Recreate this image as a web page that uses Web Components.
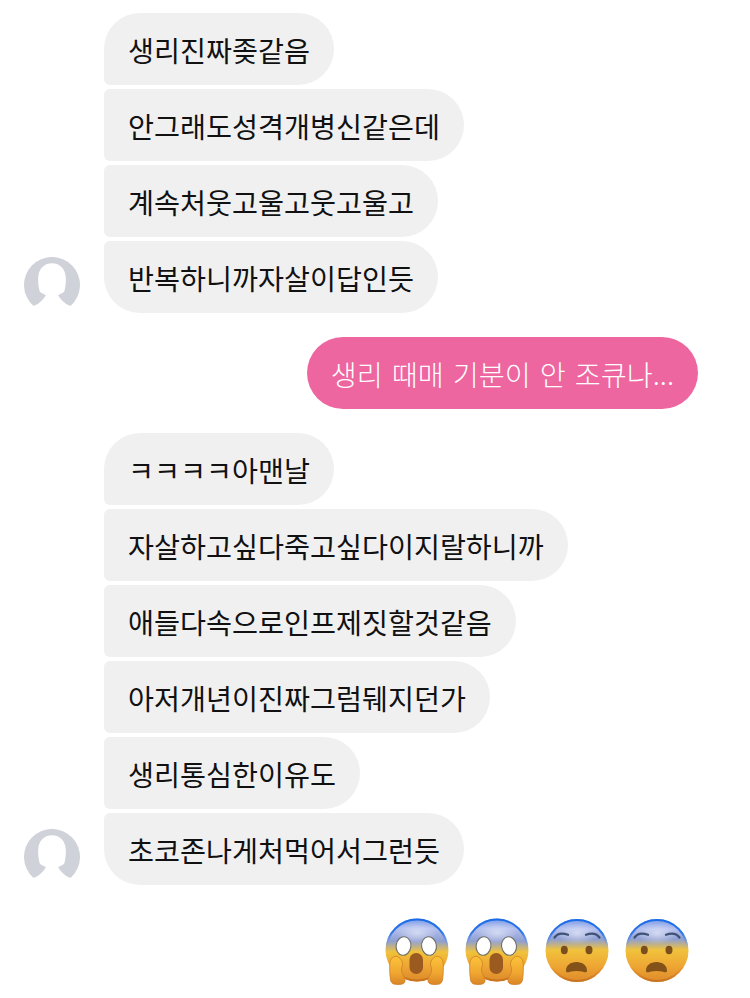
<!DOCTYPE html>
<html lang="ko">
<head>
<meta charset="utf-8">
<title>chat</title>
<style>
  html, body { margin: 0; background: #fff; }
  body { font-family: "Noto Sans CJK KR", "Noto Sans", sans-serif; }
</style>
</head>
<body>
<chat-thread>
  <msg-group>
    <msg-bubble pos="first">생리진짜좆같음</msg-bubble>
    <msg-bubble>안그래도성격개병신같은데</msg-bubble>
    <msg-bubble>계속처웃고울고웃고울고</msg-bubble>
    <msg-bubble pos="last">반복하니까자살이답인듯</msg-bubble>
  </msg-group>
  <msg-group mine>
    <msg-bubble mine>생리 때매 기분이 안 조큐나...</msg-bubble>
  </msg-group>
  <msg-group>
    <msg-bubble pos="first">ㅋㅋㅋㅋ아맨날</msg-bubble>
    <msg-bubble>자살하고싶다죽고싶다이지랄하니까</msg-bubble>
    <msg-bubble>애들다속으로인프제짓할것같음</msg-bubble>
    <msg-bubble>아저개년이진짜그럼뒈지던가</msg-bubble>
    <msg-bubble>생리통심한이유도</msg-bubble>
    <msg-bubble pos="last">초코존나게처먹어서그런듯</msg-bubble>
  </msg-group>
  <emoji-row></emoji-row>
</chat-thread>

<script>
(function () {
  'use strict';

  class ChatThread extends HTMLElement {
    constructor() {
      super();
      this.attachShadow({ mode: 'open' });
      this.shadowRoot.innerHTML = `
        <style>
          :host {
            display: flex;
            flex-direction: column;
            gap: 24px;
            width: 750px;
            height: 998px;
            box-sizing: border-box;
            padding-top: 13px;
            overflow: hidden;
            background: #fff;
          }
        </style>
        <slot></slot>
      `;
    }
  }

  class MsgGroup extends HTMLElement {
    constructor() {
      super();
      this.attachShadow({ mode: 'open' });
      this.shadowRoot.innerHTML = `
        <style>
          :host {
            display: flex;
            align-items: flex-end;
            padding: 0 52px 0 24px;
          }
          :host([mine]) {
            justify-content: flex-end;
          }
          .avatar {
            flex: none;
            width: 56px;
            height: 56px;
            margin-right: 24px;
          }
          :host([mine]) .avatar { display: none; }
          .stack {
            display: flex;
            flex-direction: column;
            align-items: flex-start;
            gap: 4px;
          }
          :host([mine]) .stack { align-items: flex-end; }
        </style>
        <svg class="avatar" viewBox="0 0 56 56">
          <path fill="#d0d2d9" d="M9.300 48.800A28 28 0 1 1 46.700 48.800C44 49 36 43 34.300 38C38 36.500 40.700 35 40.700 33C42 27 42 22 41.700 19.700C41 11 35 6.300 28 6.300C21 6.300 15 11 14.300 19.700C14 22 14 27 15.300 33C15.300 35 18 36.500 21.700 38C20 43 12 49 9.300 48.800Z"/>
        </svg>
        <div class="stack"><slot></slot></div>
      `;
    }
  }

  class MsgBubble extends HTMLElement {
    constructor() {
      super();
      this.attachShadow({ mode: 'open' });
      this.shadowRoot.innerHTML = `
        <style>
          :host {
            display: block;
            height: 72px;
            box-sizing: border-box;
            padding: 0 24px;
            border-radius: 6px 36px 36px 6px;
            background: #f0f0f1;
            color: #111;
            font-size: 28.26px;
            line-height: 74px;
            white-space: nowrap;
          }
          :host([pos="first"]) { border-top-left-radius: 36px; }
          :host([pos="last"]) { border-bottom-left-radius: 36px; }
          :host([mine]) {
            border-radius: 36px;
            background: #ee66a0;
            color: #fff;
            font-weight: 300;
            word-spacing: 1.1px;
          }
        </style>
        <slot></slot>
      `;
    }
  }

  // gradients and rim shared by both faces
  function faceBase(id, cy, split) {
    return `
      <defs>
        <linearGradient id="sk${id}" x1="0" y1="0" x2="0" y2="1">
          <stop offset="0" stop-color="#7b9de6"/>
          <stop offset=".16" stop-color="#b4bfee"/>
          <stop offset="${split - 0.1}" stop-color="#8f9fd2"/>
          <stop offset="${split + 0.07}" stop-color="#f0c23c"/>
          <stop offset=".75" stop-color="#eea633"/>
          <stop offset="1" stop-color="#dd8a2a"/>
        </linearGradient>
        <linearGradient id="rim${id}" x1="0" y1="0" x2="0" y2="1">
          <stop offset="0" stop-color="#1c6ce8"/>
          <stop offset=".22" stop-color="#2f78e8"/>
          <stop offset=".45" stop-color="#6f9be8" stop-opacity="0"/>
          <stop offset=".75" stop-color="#d98327" stop-opacity="0"/>
          <stop offset="1" stop-color="#c9731f"/>
        </linearGradient>
        <radialGradient id="glow${id}">
          <stop offset="0" stop-color="#fff" stop-opacity=".5"/>
          <stop offset="1" stop-color="#fff" stop-opacity="0"/>
        </radialGradient>
      </defs>
      <circle cx="32" cy="${cy}" r="31.500" fill="url(#sk${id})"/>
      <ellipse cx="32" cy="${cy - 17}" rx="20" ry="11" fill="url(#glow${id})"/>
      <circle cx="32" cy="${cy}" r="30.500" fill="none" stroke="url(#rim${id})" stroke-width="2"/>`;
  }

  function screamFace(id) {
    return `
      <svg viewBox="0 0 64 68" width="64" height="68">
        ${faceBase(id, 32, 0.46)}
        <linearGradient id="hd${id}" x1="0" y1="0" x2="0" y2="1">
          <stop offset="0" stop-color="#fbc23a"/>
          <stop offset=".6" stop-color="#f0a630"/>
          <stop offset="1" stop-color="#d98426"/>
        </linearGradient>
        <ellipse cx="18.500" cy="28" rx="7.400" ry="9.300" fill="#fff" stroke="#6e6e68" stroke-width="1.100" transform="rotate(8 18.500 28)"/>
        <ellipse cx="44" cy="28" rx="7.400" ry="9.300" fill="#fff" stroke="#6e6e68" stroke-width="1.100" transform="rotate(-8 44 28)"/>
        <rect x="24.500" y="35" width="13.500" height="21" rx="6.700" fill="#9a5a20"/>
        <path d="M4.700 50C4.500 45 5 41.500 7 40C9.500 38 12.500 37.500 14.500 40C16.500 42 18 44 17.500 47C16.500 50 16 52 17 55C18.500 58 20 60 20 62.500C20 65.500 17.500 66.500 13 66.500C9 66.500 6.500 66 5.500 62C4.800 58 4.800 54 4.700 50Z" fill="url(#hd${id})" stroke="#cf7f25" stroke-width=".8"/>
        <path d="M58.300 50C58.500 45 58 41.500 56 40C53.500 38 50.500 37.500 48.500 40C46.500 42 45 44 45.500 47C46.500 50 47 52 46 55C44.500 58 43 60 43 62.500C43 65.500 45.500 66.500 50 66.500C54 66.500 56.500 66 57.500 62C58.200 58 58.200 54 58.300 50Z" fill="url(#hd${id})" stroke="#cf7f25" stroke-width=".8"/>
      </svg>`;
  }

  function fearFace(id) {
    return `
      <svg viewBox="0 0 64 68" width="64" height="68">
        ${faceBase(id, 32.500, 0.42)}
        <path d="M9.500 19.500C12 16 17 14.500 23 16.800" fill="none" stroke="#3f5275" stroke-width="2.200" stroke-linecap="round"/>
        <path d="M54.500 19.500C52 16 47 14.500 41 16.800" fill="none" stroke="#3f5275" stroke-width="2.200" stroke-linecap="round"/>
        <ellipse cx="19.300" cy="32" rx="3.500" ry="4.200" fill="#7a4f1b"/>
        <ellipse cx="44" cy="32" rx="3.500" ry="4.200" fill="#7a4f1b"/>
        <path d="M21 52.500C21 47.500 25.500 44 31.500 44S42 47.500 42 52.500C42 55 40 54.500 38 53.800C34 52.600 29 52.600 25 53.800C23 54.500 21 55 21 52.500Z" fill="#825219"/>
      </svg>`;
  }

  class EmojiRow extends HTMLElement {
    constructor() {
      super();
      this.attachShadow({ mode: 'open' });
      this.shadowRoot.innerHTML = `
        <style>
          :host {
            display: flex;
            justify-content: flex-end;
            gap: 16px;
            padding-right: 61px;
            margin-top: 9px;
          }
          svg { display: block; }
        </style>
        ${screamFace('a')}${screamFace('b')}${fearFace('c')}${fearFace('d')}
      `;
    }
  }

  customElements.define('chat-thread', ChatThread);
  customElements.define('msg-group', MsgGroup);
  customElements.define('msg-bubble', MsgBubble);
  customElements.define('emoji-row', EmojiRow);
})();
</script>
</body>
</html>
